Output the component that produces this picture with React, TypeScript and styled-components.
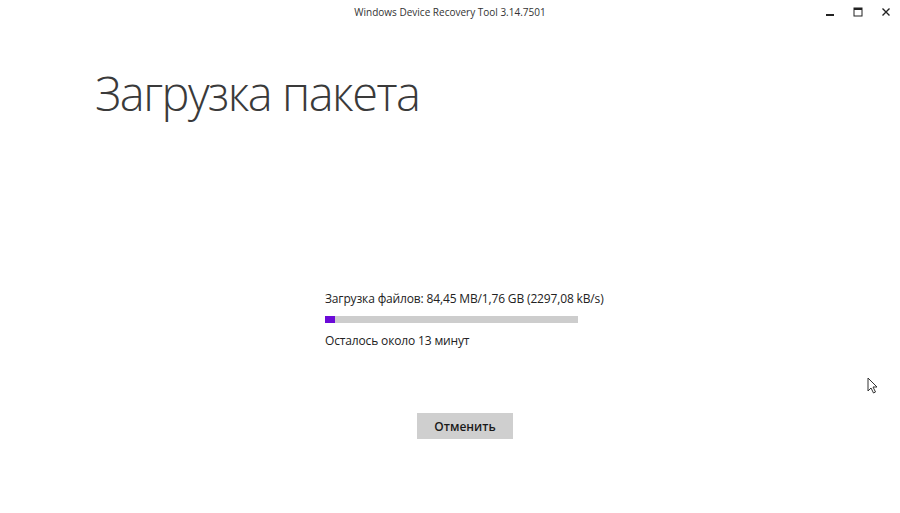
import React from 'react';
import styled, { createGlobalStyle } from 'styled-components';

const GlobalStyle = createGlobalStyle`
    html, body {
        margin: 0;
        padding: 0;
        background: #ffffff;
    }
    body {
        font-family: "Open Sans", "Noto Sans", "Liberation Sans", sans-serif;
        color: #222;
    }
`;

const Window = styled.div`
    position: relative;
    width: 900px;
    height: 513px;
    background: #fff;
    overflow: hidden;
    display: flex;
    flex-direction: column;
`;

const TitleBar = styled.div`
    height: 24px;
    display: flex;
    align-items: center;
    justify-content: center;
    position: relative;
`;

const TitleText = styled.div`
    font-size: 10px;
    color: #333;
    margin-top: -1px;
`;

const Controls = styled.div`
    position: absolute;
    right: 0;
    top: 0;
    height: 24px;
    display: flex;
    align-items: center;
`;

const Ctrl = styled.div`
    width: 28px;
    height: 24px;
    display: flex;
    align-items: center;
    justify-content: center;
`;

const Heading = styled.h1`
    margin: 39px 0 0 95px;
    font-size: 47px;
    font-weight: 300;
    color: #3a3a3a;
    line-height: 60px;
    letter-spacing: -1.5px;
`;

const Progress = styled.div`
    margin: 168px 0 0 325px;
    width: 300px;
    display: flex;
    flex-direction: column;
`;

const Label = styled.div`
    font-size: 12px;
    color: #222;
    line-height: 16px;
    white-space: nowrap;
    letter-spacing: -0.15px;
`;

const Track = styled.div`
    margin: 9px 0 10px;
    width: 253px;
    height: 7px;
    background: #cdcdcd;
`;

const Fill = styled.div`
    height: 100%;
    background: #6b0ad8;
`;

const ButtonRow = styled.div`
    margin-top: 64px;
    display: flex;
    justify-content: center;
    padding-left: 30px;
`;

const Button = styled.button`
    width: 96px;
    height: 26px;
    border: none;
    background: #cfcfcf;
    font-family: "Open Sans", "Noto Sans", sans-serif;
    font-size: 12px;
    font-weight: 600;
    color: #1a1a1a;
    padding: 0;
`;

const Cursor = styled.div`
    position: absolute;
    left: 867px;
    top: 377px;
`;

export default function App() {
    // bar in the window lags a little behind the byte counter
    const done = 0.04;
    return (
        <>
            <GlobalStyle />
            <Window>
                <TitleBar>
                    <TitleText>Windows Device Recovery Tool 3.14.7501</TitleText>
                    <Controls>
                        <Ctrl>
                            <svg width="10" height="10" viewBox="0 0 10 10">
                                <rect x="1" y="7" width="8" height="2" fill="#222" />
                            </svg>
                        </Ctrl>
                        <Ctrl>
                            <svg width="10" height="10" viewBox="0 0 10 10">
                                <rect x="1" y="1" width="8" height="8" fill="none" stroke="#222" strokeWidth="1" />
                                <rect x="1" y="1" width="8" height="2" fill="#222" />
                            </svg>
                        </Ctrl>
                        <Ctrl>
                            <svg width="10" height="10" viewBox="0 0 10 10">
                                <path d="M1.5 1.5 L8.5 8.5 M8.5 1.5 L1.5 8.5" stroke="#222" strokeWidth="1.4" />
                            </svg>
                        </Ctrl>
                    </Controls>
                </TitleBar>
                <Heading>Загрузка пакета</Heading>
                <Progress>
                    <Label>Загрузка файлов: 84,45 MB/1,76 GB (2297,08 kB/s)</Label>
                    <Track>
                        <Fill style={{ width: `${done * 100}%` }} />
                    </Track>
                    <Label>Осталось около 13 минут</Label>
                </Progress>
                <ButtonRow>
                    <Button>Отменить</Button>
                </ButtonRow>
                <Cursor>
                    <svg width="12" height="18" viewBox="0 0 12 18">
                        <path d="M1 1 L1 14 L4 11 L6.5 16 L8.5 15 L6 10 L10 10 Z" fill="#fff" stroke="#333" strokeWidth="1" />
                    </svg>
                </Cursor>
            </Window>
        </>
    );
}
